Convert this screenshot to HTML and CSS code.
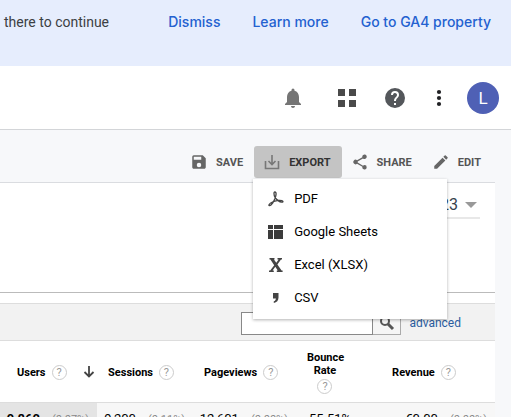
FILE: index.html
```html
<!DOCTYPE html>
<html lang="en">
<head>
<meta charset="utf-8">
<title>Analytics</title>
<link rel="stylesheet" href="styles.css">
</head>
<body>
<div class="notice">
  <span class="notice-text">there to continue</span>
  <nav class="notice-links">
    <a href="#">Dismiss</a>
    <a href="#">Learn more</a>
    <a href="#">Go to GA4 property</a>
  </nav>
</div>
<header class="header">
  <button class="icon-btn bell" aria-label="Notifications"><svg width="24" height="24" viewBox="0 0 24 24"><path fill="#757575" d="M12 22c1.100 0 2-.9 2-2h-4c0 1.100.9 2 2 2zm6-6v-5c0-3.070-1.630-5.640-4.500-6.320V4a1.500 1.500 0 0 0-3 0v.68C7.640 5.360 6 7.920 6 11v5l-2 2v1h16v-1z"/></svg></button>
  <button class="icon-btn apps" aria-label="Apps"><svg width="18" height="18" viewBox="0 0 18 18"><path fill="#4a4a4a" d="M0 0h7v7H0zM11 0h7v7h-7zM0 11h7v7H0zM11 11h7v7h-7z"/></svg></button>
  <button class="icon-btn help-main" aria-label="Help"><svg width="24" height="24" viewBox="0 0 24 24"><path fill="#54575b" d="M12 2a10 10 0 1 0 0 20 10 10 0 0 0 0-20zm1 17h-2v-2h2zm2.070-7.750-.9.920C13.450 12.900 13 13.500 13 15h-2v-.5c0-1.100.45-2.100 1.170-2.830l1.240-1.260A2 2 0 1 0 10 9H8a4 4 0 1 1 8 0c0 .88-.36 1.680-.93 2.250z"/></svg></button>
  <button class="icon-btn more" aria-label="More"><svg width="6" height="18" viewBox="0 0 6 18"><g fill="#202124"><circle cx="3" cy="3" r="2.100"/><circle cx="3" cy="9" r="2.100"/><circle cx="3" cy="15" r="2.100"/></g></svg></button>
  <button class="avatar" aria-label="Account">L</button>
</header>
<main class="page">
  <div class="actions">
    <button class="action save"><svg width="18" height="18" viewBox="0 0 24 24"><path fill="#666" d="M17 3H5a2 2 0 0 0-2 2v14c0 1.100.9 2 2 2h14c1.100 0 2-.9 2-2V7zm-5 16a3 3 0 1 1 0-6 3 3 0 0 1 0 6zm3-10H5V5h10z"/></svg>SAVE</button>
    <div class="export">
      <button class="action open" aria-expanded="true"><svg width="18" height="18" viewBox="0 0 18 18" fill="none" stroke="#777" stroke-width="1.600"><path d="M2.500 8v7.500h13V8M9 2v9M5.500 8 9 11.500 12.500 8"/></svg>EXPORT</button>
      <div class="menu">
        <button><svg width="16" height="16" viewBox="0 0 16 16" fill="none" stroke="#444" stroke-width="1.500"><path d="M6.800 1c2 0 1.300 3.500.2 6.500-1.100 2.800-2.600 5.300-4 6.500-1.200 1-2.600.8-2-.3C2.200 11.500 7 9.500 11 9.300c2.300-.1 4 .4 4 1.200 0 1-2.500.8-4.500-.6C7.800 8 6 4.500 6 2.500 6 1.500 6.300 1 6.800 1z" stroke-width="1.300"/></svg>PDF</button>
        <button><svg width="16" height="16" viewBox="0 0 16 16"><path fill="#3c3c3c" d="M0 1h5v4H0zM6 1h9v4H6zM0 6h5v9H0zM6 6h9v9H6z"/></svg>Google Sheets</button>
        <button><svg width="16" height="16" viewBox="0 0 16 16"><path fill="#444" d="M1.500 1h5v1.500h-.6L8.300 5.800l2.300-3.300H9.500V1H14v1.500h-1L9.400 7.400l4.200 6.100h1V15H8.800v-1.500h1L7.300 9.800l-2.700 3.700h1.200V15H1v-1.500h1.200l4-5.300-3.800-5.700h-.9z"/></svg>Excel (XLSX)</button>
        <button><svg width="16" height="16" viewBox="0 0 16 16"><path fill="#444" d="M5 3h5.500v4.500c0 3-1.700 5-4.700 5.500v-1.700c1.300-.4 2-1.300 2.100-2.800H5z"/></svg>CSV</button>
      </div>
    </div>
    <button class="action share"><svg width="18" height="18" viewBox="0 0 24 24"><path fill="#666" d="M18 16.080c-.76 0-1.440.3-1.960.77L8.910 12.700a3.300 3.300 0 0 0 0-1.400l7.050-4.110A3 3 0 1 0 15 5c0 .24.040.47.090.7L8.040 9.810a3 3 0 1 0 0 4.380l7.120 4.160A2.920 2.920 0 1 0 18 16.080z"/></svg>SHARE</button>
    <button class="action edit"><svg width="18" height="18" viewBox="0 0 24 24"><path fill="#666" d="M3 17.250V21h3.750L17.810 9.940l-3.750-3.750zM20.710 7.040a1 1 0 0 0 0-1.410l-2.340-2.340a1 1 0 0 0-1.410 0l-1.830 1.830 3.750 3.750z"/></svg>EDIT</button>
  </div>
  <section class="range">
    <button class="date">2023<svg width="12" height="6" viewBox="0 0 12 6"><path fill="#999" d="M0 0h12L6 6z"/></svg></button>
  </section>
  <section class="report">
    <form class="search">
      <input type="text" aria-label="Search">
      <button type="button" class="search-btn" aria-label="Search table"><svg width="16" height="16" viewBox="0 0 16 16" fill="none" stroke="#555"><circle cx="6" cy="6" r="4" stroke-width="2"/><path stroke-width="3" d="m9 9 5 5"/></svg></button>
      <a href="#">advanced</a>
    </form>
    <table class="data">
      <colgroup><col class="c-users"><col class="c-sessions"><col class="c-views"><col class="c-bounce"><col class="c-revenue"></colgroup>
      <thead>
        <tr>
          <th class="sorted"><div class="head">Users <span class="hint">?</span><svg class="sort" width="12" height="12" viewBox="0 0 12 12" fill="none" stroke="#444" stroke-width="1.800"><path d="M6 0v10.500M1.500 6 6 10.500 10.500 6"/></svg></div></th>
          <th><div class="head">Sessions <span class="hint">?</span></div></th>
          <th><div class="head">Pageviews <span class="hint">?</span></div></th>
          <th><div class="head stacked">Bounce<br>Rate <span class="hint">?</span></div></th>
          <th><div class="head">Revenue <span class="hint">?</span></div></th>
        </tr>
      </thead>
      <tbody>
        <tr>
          <td class="sorted"><b>9,860</b><small>(0.07%)</small></td>
          <td>9,200<small>(0.11%)</small></td>
          <td>12,601<small>(0.00%)</small></td>
          <td class="bounce">55.51%</td>
          <td>€0.00<small>(0.00%)</small></td>
        </tr>
      </tbody>
    </table>
  </section>
</main>
</body>
</html>
```
FILE: styles.css
```css
* { box-sizing: border-box; }

body {
  margin: 0;
  height: 100vh;
  overflow: hidden;
  background: #f7f8fa;
  color: #000;
  font-family: Roboto, "Liberation Sans", sans-serif;
  font-size: 12px;
}

button {
  margin: 0;
  padding: 0;
  border: 0;
  background: none;
  font: inherit;
  color: inherit;
}

svg { display: block; flex: none; }
a { text-decoration: none; }

.notice {
  display: flex;
  justify-content: space-between;
  height: 66px;
  padding: 12px 20px 0 4px;
  background: #e6edfd;
  font-size: 14px;
  line-height: 20px;
}
.notice-text { color: #3c4043; }
.notice-links { display: flex; gap: 32px; }
.notice-links a {
  color: #2361d0;
  font-family: Inter, Roboto, sans-serif;
  font-weight: 500;
}

.header {
  display: flex;
  align-items: center;
  justify-content: flex-end;
  height: 64px;
  padding-right: 12px;
  background: #fff;
  border-bottom: 1px solid #d3d5d8;
}
.apps { margin-left: 33px; }
.help-main { margin-left: 27px; }
.more { margin-left: 29px; }
.avatar {
  width: 32px;
  height: 32px;
  margin-left: 25px;
  border-radius: 50%;
  background: #4f60b5;
  color: #fff;
  font-size: 17px;
}

.actions {
  display: flex;
  justify-content: flex-end;
  height: 53px;
  padding: 16px 8px 0 0;
  margin-right: 16px;
  border-bottom: 1px solid #dadce0;
}
.action {
  display: flex;
  align-items: center;
  gap: 8px;
  height: 32px;
  color: #555;
  font-size: 11px;
  font-weight: 700;
}
.save { padding-right: 11px; }
.export { position: relative; }
.open {
  padding: 0 11px 0 9px;
  border-radius: 3px;
  background: #c4c4c4;
  color: #333;
}
.share { padding-left: 9px; padding-right: 20px; }
.edit { padding-right: 6px; }

.menu {
  position: absolute;
  z-index: 2;
  top: 33px;
  left: -1px;
  width: 194px;
  padding: 3px 0 5px;
  background: #fff;
  box-shadow: 0 1px 3px rgba(0, 0, 0, .3);
}
.menu button {
  display: flex;
  align-items: center;
  gap: 10px;
  width: 100%;
  height: 33px;
  padding-left: 15px;
  font-size: 13px;
}

.range {
  display: flex;
  justify-content: flex-end;
  align-items: flex-start;
  height: 110px;
  margin-right: 16px;
  padding: 9px 15px 0 0;
  background: #fff;
  border-bottom: 1px solid #bbb;
}
.date {
  display: flex;
  align-items: center;
  gap: 7px;
  height: 27px;
  padding-right: 3px;
  border-bottom: 2px solid #e8e8e8;
  color: #37424d;
  font-size: 16px;
}

.report {
  margin-right: 16px;
  padding-top: 10px;
  background: #fff;
}
.search {
  display: flex;
  justify-content: flex-end;
  align-items: center;
  height: 38px;
  padding: 2px 34px 0 0;
  background: #f2f2f2;
  border: solid #ddd;
  border-width: 1px 0;
}
.search input {
  width: 132px;
  height: 23px;
  border: 1px solid #888;
  border-radius: 0;
  background: #fff;
}
.search-btn {
  display: flex;
  align-items: center;
  justify-content: center;
  width: 28px;
  height: 23px;
  border: 1px solid #aaa;
  border-left: 0;
  background: #f5f5f5;
}
.search a { margin-left: 8px; color: #2a5d9f; }

.data {
  width: 100%;
  table-layout: fixed;
  border-collapse: collapse;
}
.c-users { width: 19.6%; }
.c-sessions { width: 19.4%; }
.c-views { width: 20.8%; }
.c-bounce { width: 17.2%; }
.c-revenue { width: 23%; }
.data th {
  height: 61px;
  padding: 2px 0 0 11px;
  border-bottom: 1px solid #ddd;
  font-size: 11px;
  line-height: 13px;
  text-align: left;
}
.data th.sorted { padding-left: 17px; }
.head { display: flex; align-items: center; gap: 6px; }
.stacked { display: block; width: 36px; text-align: center; }
.stacked .hint { display: block; margin: 2px auto 0; }
.hint {
  flex: none;
  width: 15px;
  height: 15px;
  border: 1px solid #ccc;
  border-radius: 50%;
  color: #999;
  font-size: 11px;
  font-weight: 400;
  line-height: 13px;
  text-align: center;
}
.sort { margin-left: 10px; }
.data td {
  padding: 7px 8px 7px 0;
  background: #f7f7f7;
  font-size: 13px;
  line-height: 18px;
  text-align: right;
  white-space: nowrap;
}
.data td.sorted { background: #e4e4e4; }
.data td.bounce { padding-right: 30px; }
.data small { margin-left: 12px; color: #888; font-size: 11px; }
```
